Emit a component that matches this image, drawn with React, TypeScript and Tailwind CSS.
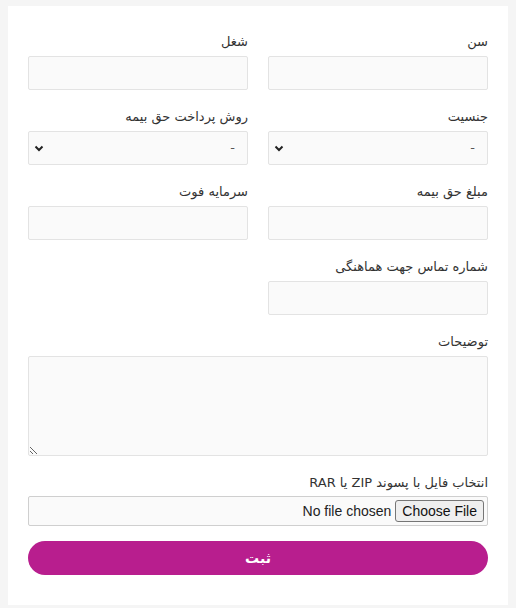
import React from 'react';

const labelCls = 'block h-5 mb-1 text-[13px] leading-5 text-[#333]';
const inputCls = 'block w-full h-[34px] rounded-[2px] border border-[#e3e3e3] bg-[#fafafa] px-3 text-[13px] outline-none';

const Field = ({ label, children }: { label: string; children: React.ReactNode }) => (
  <div className="mb-[17px]">
    <label className={labelCls}>{label}</label>
    {children}
  </div>
);

const Select = () => (
  <div className="relative">
    <select className={inputCls + ' appearance-none text-[#555]'}>
      <option>-</option>
    </select>
    <svg
      className="pointer-events-none absolute left-[6px] top-1/2 -translate-y-1/2"
      width="10"
      height="8"
      viewBox="0 0 10 8"
    >
      <path d="M1.5 2.5 L5 6 L8.5 2.5" fill="none" stroke="#222" strokeWidth="2" />
    </svg>
  </div>
);

const App: React.FC = () => {
  return (
    <div className="min-h-screen bg-[#f5f5f5] px-2 pt-[6px] pb-[3px]" style={{ fontFamily: '"DejaVu Sans", sans-serif' }}>
      <form dir="rtl" className="bg-white px-5 pt-[26px] pb-[30px]">
        <div className="grid grid-cols-2 gap-x-5">
          <Field label="سن">
            <input className={inputCls} />
          </Field>
          <Field label="شغل">
            <input className={inputCls} />
          </Field>
          <Field label="جنسیت">
            <Select />
          </Field>
          <Field label="روش پرداخت حق بیمه">
            <Select />
          </Field>
          <Field label="مبلغ حق بیمه">
            <input className={inputCls} />
          </Field>
          <Field label="سرمایه فوت">
            <input className={inputCls} />
          </Field>
          <Field label="شماره تماس جهت هماهنگی">
            <input className={inputCls} />
          </Field>
        </div>

        <Field label="توضیحات">
          <textarea className="block w-full h-[100px] rounded-[2px] border border-[#e3e3e3] bg-[#fafafa] p-2 text-[13px] outline-none" />
        </Field>

        <div className="mb-[15px]">
          <label className="block h-5 mb-[3px] text-[13px] leading-5 text-[#333]">انتخاب فایل با پسوند ZIP یا RAR</label>
          <input
            type="file"
            className="block w-full h-[30px] rounded-[2px] border border-[#cfcfcf] bg-[#fafafa] px-[3px] py-[3px] text-[14px] leading-none text-[#222] file:me-1 file:h-[22px] file:rounded-[3px] file:border file:border-solid file:border-[#767676] file:bg-[#efefef] file:px-[6px] file:text-[14px] file:text-[#111]"
            style={{ fontFamily: '"Liberation Sans", Arial, sans-serif' }}
          />
        </div>

        <button
          type="button"
          className="block w-full h-[34px] rounded-full bg-[#b81e8e] text-[14px] font-bold text-white"
        >
          ثبت
        </button>
      </form>
    </div>
  );
};

export default App;
